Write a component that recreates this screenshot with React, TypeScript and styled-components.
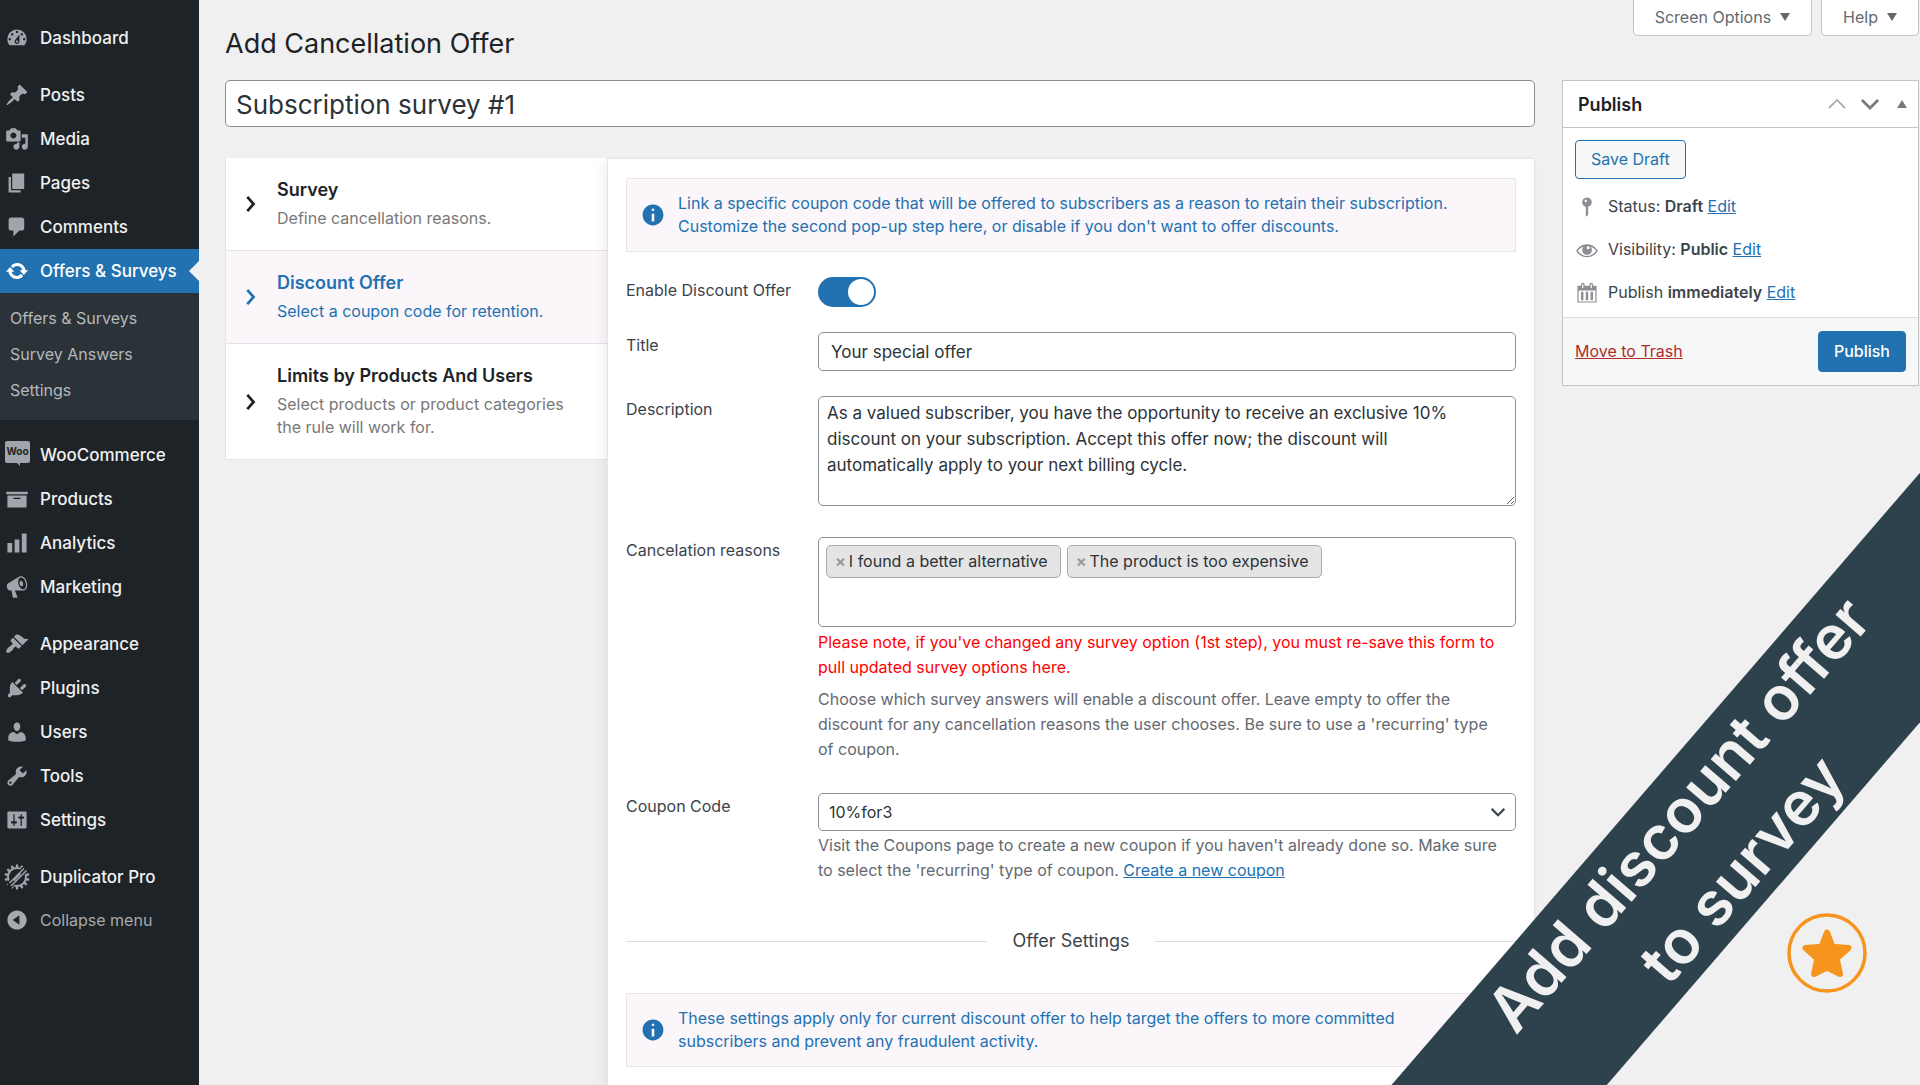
import React, { useState } from "react";
import styled, { createGlobalStyle, css } from "styled-components";

const color = {
  page: "#f0f0f1",
  ink: "#1d2327",
  body: "#3c434a",
  muted: "#646970",
  blue: "#2271b1",
  tint: "#faf6fa",
  line: "#c3c4c7",
  soft: "#e4e4e8",
  control: "#8c8f94",
  dark: "#1d2327",
  darker: "#2c3338",
  ribbon: "#2e424d",
  orange: "#f7941d",
};

const GlobalStyle = createGlobalStyle`
  *, *::before, *::after { box-sizing: border-box; }
  body {
    margin: 0;
    background: ${color.page};
    color: ${color.body};
    font-family: Inter, "Liberation Sans", sans-serif;
    font-size: 16px;
    line-height: 25px;
  }
  button, input, textarea, select { font: inherit; color: inherit; }
  h1, h2, p, ul { margin: 0; padding: 0; }
  ul { list-style: none; }
`;

const icons = {
  dashboard:
    "M3.76 16h12.48c1.1-1.37 1.76-3.11 1.76-5 0-4.42-3.58-8-8-8s-8 3.58-8 8c0 1.89.66 3.63 1.76 5zM10 4c.55 0 1 .45 1 1s-.45 1-1 1-1-.45-1-1 .45-1 1-1zM6 6c.55 0 1 .45 1 1s-.45 1-1 1-1-.45-1-1 .45-1 1-1zm8 0c.55 0 1 .45 1 1s-.45 1-1 1-1-.45-1-1 .45-1 1-1zm-5.37 5.55L12 7v6c0 1.1-.9 2-2 2s-2-.9-2-2c0-.57.24-1.08.63-1.45zM4 10c.55 0 1 .45 1 1s-.45 1-1 1-1-.45-1-1 .45-1 1-1zm12 0c.55 0 1 .45 1 1s-.45 1-1 1-1-.45-1-1 .45-1 1-1zm-5 3c0-.55-.45-1-1-1s-1 .45-1 1 .45 1 1 1 1-.45 1-1z",
  post: "M10.44 3.02l1.82-1.82 6.36 6.35-1.83 1.82c-1.05-.68-2.48-.57-3.41.36l-.75.75c-.92.93-1.04 2.35-.35 3.41l-1.83 1.82-2.41-2.41-2.8 2.79c-.42.42-3.38 2.71-3.8 2.29s1.86-3.39 2.28-3.81l2.79-2.79L4.1 9.36l1.83-1.82c1.05.69 2.48.57 3.4-.36l.75-.75c.93-.92 1.05-2.35.36-3.41z",
  media:
    "M13 11V4c0-.55-.45-1-1-1h-1.67L9 1H5L3.67 3H2c-.55 0-1 .45-1 1v7c0 .55.45 1 1 1h10c.55 0 1-.45 1-1zM7 4.5c1.38 0 2.5 1.12 2.5 2.5S8.38 9.5 7 9.5 4.5 8.38 4.5 7 5.62 4.5 7 4.5zM14 6h5v10.5c0 1.38-1.12 2.5-2.5 2.5S14 17.88 14 16.5s1.12-2.5 2.5-2.5c.17 0 .34.02.5.05V9h-3V6zm-4 8.05V13h2v3.5c0 1.38-1.12 2.5-2.5 2.5S7 17.88 7 16.5 8.12 14 9.5 14c.17 0 .34.02.5.05z",
  page: "M6 15V2h10v13H6zm-1 1h8v2H3V5h2v11z",
  comments:
    "M5 2h9c1.1 0 2 .9 2 2v7c0 1.1-.9 2-2 2h-2l-5 5v-5H5c-1.1 0-2-.9-2-2V4c0-1.1.9-2 2-2z",
  update:
    "M10.2 3.28c3.53 0 6.43 2.61 6.92 6h2.08l-3.5 4-3.5-4h2.32c-.45-1.97-2.21-3.45-4.32-3.45-1.45 0-2.73.71-3.54 1.78L4.95 5.66C6.23 4.2 8.11 3.28 10.2 3.28zm-.4 13.44c-3.52 0-6.43-2.61-6.92-6H.8l3.5-4c1.17 1.33 2.33 2.67 3.5 4H5.48c.45 1.97 2.21 3.45 4.32 3.45 1.45 0 2.73-.71 3.54-1.78l1.71 1.95c-1.28 1.46-3.15 2.38-5.25 2.38z",
  archive: "M19 4v2H1V4h18zM2 7h16v10H2V7zm11 3V9H7v1h6z",
  chart: "M18 18V2h-4v16h4zm-6 0V7H8v11h4zm-6 0v-8H2v8h4z",
  megaphone:
    "M18.15 5.94c.46 1.62.38 3.22-.02 4.48-.42 1.28-1.26 2.18-2.3 2.48-.16.06-.26.06-.4.06-.06.02-.12.02-.18.02-.06.02-.14.02-.22.02h-6.8l2.22 5.5c.02.14-.06.26-.14.34-.08.1-.24.16-.34.16H6.95c-.1 0-.26-.06-.34-.16-.08-.08-.16-.2-.14-.34l-1-5.5H4.25l-.02-.02c-.5.06-1.08-.18-1.54-.62s-.88-1.08-1.06-1.88c-.24-.8-.2-1.56-.02-2.2.18-.62.58-1.08 1.06-1.3l.02-.02 9-5.4c.1-.06.18-.1.24-.16.06-.04.14-.08.24-.12.16-.08.28-.12.5-.18 1.04-.3 2.24.1 3.22.98s1.84 2.24 2.26 3.86zm-2.58 5.98h-.02c.4-.1.74-.34 1.04-.7.58-.7.86-1.76.86-3.04 0-.64-.1-1.3-.28-1.98-.34-1.36-1.02-2.5-1.78-3.24s-1.68-1.1-2.46-.88c-.82.22-1.4.96-1.7 2-.32 1.04-.28 2.36.06 3.72.38 1.36 1 2.5 1.8 3.24.78.74 1.62 1.1 2.48.88zm-2.54-7.08c.22-.04.42-.02.62.04.38.16.76.48 1.02 1s.42 1.2.42 1.78c0 .3-.04.56-.12.8-.18.48-.44.84-.86.94-.34.1-.8-.06-1.14-.4s-.64-.86-.78-1.5c-.18-.62-.12-1.24.02-1.72s.48-.84.82-.94z",
  appearance:
    "M14.48 11.06L7.41 3.99l1.5-1.5c.5-.56 2.3-.47 3.51.32 1.21.8 1.43 1.28 2.91 2.1 1.18.64 2.45 1.26 4.45.85zm-.71.71L6.7 4.7 4.93 6.47c-.39.39-.39 1.02 0 1.41l1.06 1.06c.39.39.39 1.03 0 1.42-.6.6-1.43 1.11-2.21 1.69-.35.26-.7.53-1.01.84C1.43 14.23.4 16.08 1.4 17.07c.99 1 2.84-.03 4.18-1.36.31-.31.58-.66.85-1.02.57-.78 1.08-1.61 1.69-2.21.39-.39 1.02-.39 1.41 0l1.06 1.06c.39.39 1.02.39 1.41 0z",
  plugins:
    "M13.11 4.36L9.87 7.6 8 5.73l3.24-3.24c.35-.34 1.05-.2 1.56.32.52.51.66 1.21.31 1.55zm-8 1.77l.91-1.12 9.01 9.01-1.19.84c-.71.71-2.63 1.16-3.82 1.16H6.14L4.9 17.26c-.59.59-1.54.59-2.12 0-.59-.58-.59-1.53 0-2.12l1.24-1.24v-3.88c0-1.13.4-3.19 1.09-3.89zm7.26 3.97l3.24-3.24c.34-.35 1.04-.21 1.55.31.52.51.66 1.21.31 1.55l-3.24 3.25z",
  users:
    "M10 9.25c-2.27 0-2.73-3.44-2.73-3.44C7 4.02 7.82 2 9.97 2c2.16 0 2.98 2.02 2.71 3.81 0 0-.41 3.44-2.68 3.44zm0 2.57L12.72 10c2.39 0 4.52 2.33 4.52 4.53v2.49s-3.65 1.13-7.24 1.13c-3.65 0-7.24-1.13-7.24-1.13v-2.49c0-2.25 1.94-4.48 4.47-4.48z",
  tools:
    "M16.68 9.77c-1.34 1.34-3.3 1.67-4.95.99l-5.41 6.52c-.99.99-2.59.99-3.58 0s-.99-2.59 0-3.57l6.52-5.42c-.68-1.65-.35-3.61.99-4.95 1.28-1.28 3.12-1.62 4.72-1.06l-2.89 2.89 2.82 2.82 2.86-2.87c.53 1.58.18 3.39-1.08 4.65zM3.81 16.21c.4.39 1.04.39 1.43 0 .4-.4.4-1.04 0-1.43-.39-.4-1.03-.4-1.43 0-.39.39-.39 1.03 0 1.43z",
  settings:
    "M18 16V4c0-.55-.45-1-1-1H3c-.55 0-1 .45-1 1v12c0 .55.45 1 1 1h14c.55 0 1-.45 1-1zM8 11h1c.55 0 1 .45 1 1s-.45 1-1 1H8v1.5c0 .28-.22.5-.5.5s-.5-.22-.5-.5V13H6c-.55 0-1-.45-1-1s.45-1 1-1h1V5.5c0-.28.22-.5.5-.5s.5.22.5.5V11zm5-2h-1c-.55 0-1-.45-1-1s.45-1 1-1h1V5.5c0-.28.22-.5.5-.5s.5.22.5.5V7h1c.55 0 1 .45 1 1s-.45 1-1 1h-1v5.5c0 .28-.22.5-.5.5s-.5-.22-.5-.5V9z",
  collapse:
    "M10 2c4.42 0 8 3.58 8 8s-3.58 8-8 8-8-3.58-8-8 3.58-8 8-8zm2 12V6l-5.6 4z",
  info: "M10 2c4.42 0 8 3.58 8 8s-3.58 8-8 8-8-3.58-8-8 3.58-8 8-8zm1 4c0-.55-.45-1-1-1s-1 .45-1 1 .45 1 1 1 1-.45 1-1zm0 9V9H9v6h2z",
  eye: "M18.3 9.5C15 4.9 8.5 3.8 3.9 7.2c-1.2.9-2.2 2.1-3 3.4.2.4.5.8.8 1.2 3.3 4.6 9.6 5.6 14.2 2.4.9-.7 1.7-1.4 2.4-2.4.3-.4.5-.8.8-1.2-.3-.4-.5-.8-.8-1.1zm-8.2-2.3c.5-.5 1.3-.5 1.8 0s.5 1.3 0 1.8-1.3.5-1.8 0-.5-1.3 0-1.8zm-.1 7.7c-3.1 0-6-1.6-7.7-4.2C3.5 9 5.1 7.8 7 7.2c-.7.8-1 1.7-1 2.7 0 2.2 1.7 4.1 4 4.1 2.2 0 4.1-1.7 4.1-4v-.1c0-1-.4-2-1.1-2.7 1.9.6 3.5 1.8 4.7 3.5-1.7 2.6-4.6 4.2-7.7 4.2z",
  calendar:
    "M15 4h3v14H2V4h3V3c0-.83.67-1.5 1.5-1.5S8 2.17 8 3v1h4V3c0-.83.67-1.5 1.5-1.5S15 2.17 15 3v1zM6 3v2.5c0 .28.22.5.5.5s.5-.22.5-.5V3c0-.28-.22-.5-.5-.5S6 2.72 6 3zm7 0v2.5c0 .28.22.5.5.5s.5-.22.5-.5V3c0-.28-.22-.5-.5-.5s-.5.22-.5.5zm4 14V8H3v9h14zM7 16V9H5v7h2zm4 0V9H9v7h2zm4 0V9h-2v7h2z",
  status:
    "M14 6c0 1.86-1.28 3.41-3 3.86V16c0 1-2 2-2 2V9.86c-1.72-.45-3-2-3-3.86 0-2.21 1.79-4 4-4s4 1.79 4 4zM8 5c0 .55.45 1 1 1s1-.45 1-1-.45-1-1-1-1 .45-1 1z",
};

type IconName = keyof typeof icons | "woo" | "gear";

const Svg = styled.svg<{ $size: number }>`
  display: block;
  flex: none;
  width: ${(p) => p.$size}px;
  height: ${(p) => p.$size}px;
  fill: currentColor;
`;

function Icon({ name, size = 24 }: { name: IconName; size?: number }) {
  if (name === "woo") {
    return (
      <Svg $size={size} viewBox="0 0 24 24" aria-hidden="true" overflow="visible">
        <path d="M2-2h21q2 0 2 2v18q0 2-2 2h-8v3l-3-3H2q-2 0-2-2V0q0-2 2-2z" />
        <text x="12.5" y="12" textAnchor="middle" fontSize="10" fontWeight="700" fill={color.dark}>
          Woo
        </text>
      </Svg>
    );
  }
  if (name === "gear") {
    const teeth = Array.from({ length: 14 }, (_, i) => i * (360 / 14));
    return (
      <Svg $size={size} viewBox="0 0 24 24" aria-hidden="true" overflow="visible">
        {teeth.map((a) => (
          <path key={a} d="M10.6 2.5l.4-3h2l.4 3z" transform={`rotate(${a} 12 12)`} />
        ))}
        <circle cx="12" cy="12" r="9" fill="none" stroke="currentColor" strokeWidth="2" />
        <path d="M3 19.5L19.5 3M4.5 22L22 4.5" stroke={color.dark} strokeWidth="4.5" />
        <path d="M4.5 18L19 3.5M6 21L21.5 5.5M8.5 15.8l7-7" stroke="currentColor" strokeWidth="1.5" />
      </Svg>
    );
  }
  return (
    <Svg $size={size} viewBox="0 0 20 20" aria-hidden="true">
      <path fillRule="evenodd" d={icons[name]} />
    </Svg>
  );
}

function Chevron({ dir, size = 18, weight = 3 }: { dir: "right" | "up" | "down"; size?: number; weight?: number }) {
  const d = { right: "M7 2l7 8-7 8", up: "M1 14.5l9-9 9 9", down: "M1 5.5l9 9 9-9" }[dir];
  return (
    <Svg $size={size} viewBox="0 0 20 20" aria-hidden="true">
      <path d={d} fill="none" stroke="currentColor" strokeWidth={weight} />
    </Svg>
  );
}

/* ---------- shell ---------- */

const Shell = styled.div`
  position: relative;
  display: grid;
  grid-template-columns: 199px minmax(0, 1fr);
  min-height: 100vh;
  overflow: hidden;
`;

const Sidebar = styled.nav`
  display: flex;
  flex-direction: column;
  gap: 13px;
  padding-top: 16px;
  background: ${color.dark};
`;

const MenuLink = styled.a<{ $active?: boolean }>`
  position: relative;
  display: flex;
  align-items: center;
  gap: 11px;
  height: 44px;
  padding-left: 5px;
  color: ${(p) => (p.$active ? "#fff" : "#f0f0f1")};
  font-size: 17px;
  font-weight: 500;
  text-decoration: none;
  white-space: nowrap;

  svg { color: ${(p) => (p.$active ? "#fff" : "#a0a5ab")}; }

  ${(p) =>
    p.$active &&
    css`
      background: ${color.blue};
      &::after {
        content: "";
        position: absolute;
        right: 0;
        border: 10px solid transparent;
        border-left-width: 0;
        border-right-color: ${color.page};
      }
    `}
`;

const SubMenu = styled.ul`
  padding: 7px 0 12px;
  background: ${color.darker};
`;

const SubLink = styled.a`
  display: block;
  padding-left: 10px;
  color: #b4b8bc;
  line-height: 36px;
  text-decoration: none;
`;

const Collapse = styled.button`
  display: flex;
  align-items: center;
  gap: 11px;
  width: 100%;
  height: 42px;
  padding: 0 0 0 5px;
  border: 0;
  background: none;
  color: #a7aaad;
`;

const menuGroups: { icon: IconName; label: string }[][] = [
  [{ icon: "dashboard", label: "Dashboard" }],
  [
    { icon: "post", label: "Posts" },
    { icon: "media", label: "Media" },
    { icon: "page", label: "Pages" },
    { icon: "comments", label: "Comments" },
    { icon: "update", label: "Offers & Surveys" },
  ],
  [
    { icon: "woo", label: "WooCommerce" },
    { icon: "archive", label: "Products" },
    { icon: "chart", label: "Analytics" },
    { icon: "megaphone", label: "Marketing" },
  ],
  [
    { icon: "appearance", label: "Appearance" },
    { icon: "plugins", label: "Plugins" },
    { icon: "users", label: "Users" },
    { icon: "tools", label: "Tools" },
    { icon: "settings", label: "Settings" },
  ],
  [{ icon: "gear", label: "Duplicator Pro" }],
];

const subMenu = ["Offers & Surveys", "Survey Answers", "Settings"];

function AdminMenu() {
  return (
    <Sidebar aria-label="Main menu">
      {menuGroups.map((group, i) => (
        <ul key={i}>
          {group.map(({ icon, label }) => {
            const active = icon === "update";
            return (
              <li key={label}>
                <MenuLink href="#" $active={active}>
                  <Icon name={icon} />
                  {label}
                </MenuLink>
                {active && (
                  <SubMenu>
                    {subMenu.map((s) => (
                      <li key={s}>
                        <SubLink href="#">{s}</SubLink>
                      </li>
                    ))}
                  </SubMenu>
                )}
              </li>
            );
          })}
          {i === menuGroups.length - 1 && (
            <li>
              <Collapse type="button">
                <Icon name="collapse" />
                Collapse menu
              </Collapse>
            </li>
          )}
        </ul>
      ))}
    </Sidebar>
  );
}

/* ---------- page ---------- */

const Page = styled.main`
  display: flex;
  flex-direction: column;
  padding: 0 1px 0 26px;
`;

const PageHeader = styled.header`
  display: flex;
  justify-content: space-between;
  height: 80px;
`;

const PageTitle = styled.h1`
  padding-top: 26px;
  color: ${color.ink};
  font-size: 27px;
  font-weight: 400;
  line-height: 36px;
`;

const ScreenTabs = styled.div`
  display: flex;
  align-items: flex-start;
  gap: 9px;
`;

const ScreenTab = styled.button`
  display: flex;
  align-items: center;
  gap: 9px;
  height: 36px;
  padding: 0 21px 1px;
  border: 1px solid ${color.line};
  border-top: 0;
  border-radius: 0 0 5px 5px;
  background: #fff;
  color: ${color.muted};
`;

const Triangle = styled.span<{ $up?: boolean }>`
  border: 5px solid transparent;
  ${(p) =>
    p.$up
      ? "border-top-width: 0; border-bottom: 8px solid #787c82;"
      : "border-bottom-width: 0; border-top: 8px solid #646970;"}
`;

const Columns = styled.div`
  display: grid;
  flex: 1;
  grid-template-columns: minmax(0, 1fr) 357px;
  gap: 27px;
`;

const MainColumn = styled.div`
  display: flex;
  flex-direction: column;
  gap: 31px;
`;

const fieldBox = css`
  display: block;
  width: 100%;
  border: 1px solid ${color.control};
  border-radius: 5px;
  background: #fff;
  color: ${color.darker};
`;

const SurveyTitle = styled.input`
  ${fieldBox}
  height: 47px;
  padding: 2px 10px 0;
  font-size: 26px;
`;

const Editor = styled.div`
  display: grid;
  flex: 1;
  grid-template-columns: 382px minmax(0, 1fr);
`;

const StepList = styled.div`
  align-self: start;
  border-left: 1px solid ${color.soft};
`;

const Step = styled.button<{ $active: boolean }>`
  display: grid;
  grid-template-columns: 18px minmax(0, 1fr);
  align-items: center;
  gap: 18px;
  width: 100%;
  padding: 20px 24px 20px 15px;
  border: 0;
  border-bottom: 1px solid ${color.soft};
  background: ${(p) => (p.$active ? color.tint : "#fff")};
  color: ${(p) => (p.$active ? color.blue : color.ink)};
  line-height: 23px;
  text-align: left;
`;

const StepText = styled.span`
  display: grid;
  gap: 6px;
`;

const StepName = styled.strong`
  font-size: 18px;
  font-weight: 600;
`;

const StepHint = styled.span<{ $active: boolean }>`
  color: ${(p) => (p.$active ? color.blue : "#787878")};
`;

const Panel = styled.form`
  position: relative;
  display: flex;
  flex-direction: column;
  gap: 25px;
  padding: 19px 18px 18px;
  border: 1px solid ${color.soft};
  border-bottom: 0;
  background: #fff;
  box-shadow: -4px 4px 10px rgba(0, 0, 0, 0.06);
`;

const Notice = styled.div`
  display: flex;
  align-items: center;
  gap: 12px;
  min-height: 74px;
  padding: 0 13px;
  border: 1px solid #e8e6ea;
  background: ${color.tint};
  color: ${color.blue};
  line-height: 23px;
`;

const NoticeText = styled.p`
  max-width: 800px;
`;

const Row = styled.div<{ $tall?: boolean }>`
  display: grid;
  grid-template-columns: 192px minmax(0, 1fr);
  align-items: start;
  padding-bottom: ${(p) => (p.$tall ? 6 : 0)}px;
`;

const Label = styled.label`
  line-height: 26px;
`;

const Switch = styled.input`
  display: flex;
  align-items: center;
  width: 58px;
  height: 30px;
  margin: 0;
  padding: 0 2px;
  border-radius: 15px;
  background: ${color.control};
  appearance: none;

  &::before {
    content: "";
    width: 26px;
    height: 26px;
    border-radius: 50%;
    background: #fff;
  }
  &:checked {
    justify-content: flex-end;
    background: ${color.blue};
  }
`;

const TextInput = styled.input`
  ${fieldBox}
  height: 39px;
  padding: 0 12px;
  font-size: 17px;
`;

const TextArea = styled.textarea`
  ${fieldBox}
  height: 110px;
  padding: 3px 24px 4px 8px;
  font-size: 17px;
  line-height: 26px;
  resize: vertical;
`;

const TagBox = styled.div`
  ${fieldBox}
  display: flex;
  flex-wrap: wrap;
  align-content: flex-start;
  gap: 6px;
  min-height: 90px;
  padding: 7px;
`;

const Tag = styled.span`
  display: flex;
  align-items: center;
  gap: 3px;
  height: 33px;
  padding: 0 12px 0 8px;
  border: 1px solid #aaa;
  border-radius: 5px;
  background: #e4e4e4;
`;

const TagRemove = styled.button`
  padding: 0;
  border: 0;
  background: none;
  color: #999;
  font-weight: 700;
`;

const TagInput = styled.input`
  flex: 1;
  min-width: 20px;
  height: 33px;
  padding: 0;
  border: 0;
  outline: 0;
  background: none;
`;

const Warning = styled.p`
  margin: 3px 0 7px;
  color: #f00;
`;

const Help = styled.p`
  padding-right: 14px;
  color: ${color.muted};
`;

const Link = styled.a<{ $danger?: boolean }>`
  color: ${(p) => (p.$danger ? "#b32d2e" : color.blue)};
`;

const SelectWrap = styled.div`
  display: grid;
  align-items: center;
  margin-bottom: 2px;

  > * { grid-area: 1 / 1; }
  > svg {
    justify-self: end;
    margin-right: 11px;
    pointer-events: none;
  }
`;

const Select = styled.select`
  ${fieldBox}
  height: 38px;
  padding: 0 30px 0 10px;
  appearance: none;
`;

const Divider = styled.h2`
  display: flex;
  align-items: center;
  gap: 25px;
  margin: 20px 0 14px;
  font-size: 18px;
  font-weight: 400;
  line-height: 26px;

  &::before, &::after {
    content: "";
    flex: 1;
    height: 1px;
    background: #dcdcde;
  }
`;

/* ---------- publish box ---------- */

const PublishBox = styled.aside`
  align-self: start;
  border: 1px solid ${color.line};
  background: #fff;
`;

const BoxHeader = styled.header`
  display: flex;
  align-items: center;
  height: 47px;
  padding: 0 11px 0 15px;
  border-bottom: 1px solid ${color.line};
`;

const BoxTitle = styled.h2`
  flex: 1;
  color: ${color.ink};
  font-size: 18px;
  font-weight: 600;
`;

const OrderButtons = styled.div`
  display: grid;
  grid-template-columns: 33px 36px auto;
  align-items: center;
`;

const OrderButton = styled.button<{ $off?: boolean }>`
  display: flex;
  padding: 0;
  border: 0;
  background: none;
  color: ${(p) => (p.$off ? "#a7aaad" : "#787c82")};
`;

const BoxBody = styled.div`
  padding: 12px 12px 3px;
`;

const Button = styled.button<{ $primary?: boolean }>`
  height: ${(p) => (p.$primary ? 41 : 39)}px;
  padding: 0 15px;
  border: 1px solid ${color.blue};
  border-radius: 4px;
  background: ${(p) => (p.$primary ? color.blue : "#f6f7f7")};
  color: ${(p) => (p.$primary ? "#fff" : color.blue)};
  font-weight: ${(p) => (p.$primary ? 500 : 400)};
`;

const MetaList = styled.ul`
  padding-top: 6px;
`;

const Meta = styled.li`
  display: flex;
  align-items: center;
  gap: 9px;
  height: 43px;

  svg { color: #8c8f94; }
  strong { font-weight: 600; }
`;

const BoxFooter = styled.footer`
  display: flex;
  align-items: center;
  justify-content: space-between;
  height: 68px;
  padding: 0 12px;
  border-top: 1px solid #dcdcde;
  background: #f6f7f7;
`;

/* ---------- promo overlay ---------- */

const Ribbon = styled.div`
  position: absolute;
  right: -335px;
  bottom: 157px;
  display: flex;
  flex-direction: column;
  justify-content: center;
  width: 1100px;
  height: 163px;
  padding-left: 14px;
  background: ${color.ribbon};
  color: #f0f0f1;
  font-size: 61px;
  font-weight: 600;
  line-height: 84px;
  text-align: center;
  transform: rotate(-49.2deg);
  pointer-events: none;
`;

const StarBadge = styled.svg`
  position: absolute;
  right: 53px;
  bottom: 92px;
  width: 80px;
  height: 80px;
`;

const steps = [
  { name: "Survey", hint: "Define cancellation reasons." },
  { name: "Discount Offer", hint: "Select a coupon code for retention." },
  { name: "Limits by Products And Users", hint: "Select products or product categories the rule will work for." },
];

const metas: { icon: IconName; label: string; value: string }[] = [
  { icon: "status", label: "Status:", value: "Draft" },
  { icon: "eye", label: "Visibility:", value: "Public" },
  { icon: "calendar", label: "Publish", value: "immediately" },
];

export default function App() {
  const [step, setStep] = useState(1);
  const [tags, setTags] = useState(["I found a better alternative", "The product is too expensive"]);

  return (
    <>
      <GlobalStyle />
      <Shell>
        <AdminMenu />
        <Page>
          <PageHeader>
            <PageTitle>Add Cancellation Offer</PageTitle>
            <ScreenTabs>
              <ScreenTab type="button">
                Screen Options <Triangle />
              </ScreenTab>
              <ScreenTab type="button">
                Help <Triangle />
              </ScreenTab>
            </ScreenTabs>
          </PageHeader>
          <Columns>
            <MainColumn>
              <SurveyTitle aria-label="Survey title" defaultValue="Subscription survey #1" />
              <Editor>
                <StepList>
                  {steps.map((s, i) => (
                    <Step key={s.name} type="button" $active={i === step} onClick={() => setStep(i)}>
                      <Chevron dir="right" />
                      <StepText>
                        <StepName>{s.name}</StepName>
                        <StepHint $active={i === step}>{s.hint}</StepHint>
                      </StepText>
                    </Step>
                  ))}
                </StepList>
                <Panel onSubmit={(e) => e.preventDefault()}>
                  <Notice>
                    <Icon name="info" size={26} />
                    <NoticeText>
                      Link a specific coupon code that will be offered to subscribers as a reason to retain their
                      subscription. Customize the second pop-up step here, or disable if you don't want to offer
                      discounts.
                    </NoticeText>
                  </Notice>
                  <Row>
                    <Label htmlFor="enable">Enable Discount Offer</Label>
                    <Switch id="enable" type="checkbox" defaultChecked />
                  </Row>
                  <Row>
                    <Label htmlFor="title">Title</Label>
                    <TextInput id="title" defaultValue="Your special offer" />
                  </Row>
                  <Row $tall>
                    <Label htmlFor="description">Description</Label>
                    <TextArea
                      id="description"
                      defaultValue="As a valued subscriber, you have the opportunity to receive an exclusive 10% discount on your subscription. Accept this offer now; the discount will automatically apply to your next billing cycle."
                    />
                  </Row>
                  <Row $tall>
                    <Label htmlFor="reasons">Cancelation reasons</Label>
                    <div>
                      <TagBox>
                        {tags.map((t) => (
                          <Tag key={t}>
                            <TagRemove
                              type="button"
                              aria-label={`Remove ${t}`}
                              onClick={() => setTags(tags.filter((x) => x !== t))}
                            >
                              ×
                            </TagRemove>
                            {t}
                          </Tag>
                        ))}
                        <TagInput id="reasons" />
                      </TagBox>
                      <Warning>
                        Please note, if you've changed any survey option (1st step), you must re-save this form to pull
                        updated survey options here.
                      </Warning>
                      <Help>
                        Choose which survey answers will enable a discount offer. Leave empty to offer the discount for
                        any cancellation reasons the user chooses. Be sure to use a 'recurring' type of coupon.
                      </Help>
                    </div>
                  </Row>
                  <Row>
                    <Label htmlFor="coupon">Coupon Code</Label>
                    <div>
                      <SelectWrap>
                        <Select id="coupon" defaultValue="10%for3">
                          <option>10%for3</option>
                        </Select>
                        <Chevron dir="down" size={14} />
                      </SelectWrap>
                      <Help>
                        Visit the Coupons page to create a new coupon if you haven't already done so. Make sure to
                        select the 'recurring' type of coupon. <Link href="#">Create a new coupon</Link>
                      </Help>
                    </div>
                  </Row>
                  <Divider>Offer Settings</Divider>
                  <Notice>
                    <Icon name="info" size={26} />
                    <NoticeText>
                      These settings apply only for current discount offer to help target the offers to more committed
                      subscribers and prevent any fraudulent activity.
                    </NoticeText>
                  </Notice>
                </Panel>
              </Editor>
            </MainColumn>
            <PublishBox>
              <BoxHeader>
                <BoxTitle>Publish</BoxTitle>
                <OrderButtons>
                  <OrderButton type="button" aria-label="Move up" $off>
                    <Chevron dir="up" weight={2} />
                  </OrderButton>
                  <OrderButton type="button" aria-label="Move down">
                    <Chevron dir="down" />
                  </OrderButton>
                  <OrderButton type="button" aria-label="Toggle panel">
                    <Triangle $up />
                  </OrderButton>
                </OrderButtons>
              </BoxHeader>
              <BoxBody>
                <Button type="button">Save Draft</Button>
                <MetaList>
                  {metas.map((m) => (
                    <Meta key={m.icon}>
                      <Icon name={m.icon} />
                      <span>
                        {m.label} <strong>{m.value}</strong> <Link href="#">Edit</Link>
                      </span>
                    </Meta>
                  ))}
                </MetaList>
              </BoxBody>
              <BoxFooter>
                <Link href="#" $danger>
                  Move to Trash
                </Link>
                <Button type="button" $primary>
                  Publish
                </Button>
              </BoxFooter>
            </PublishBox>
          </Columns>
        </Page>
        <Ribbon>
          <span>Add discount offer</span>
          <span>to survey</span>
        </Ribbon>
        <StarBadge viewBox="0 0 80 80" role="img" aria-label="Star">
          <circle cx="40" cy="40" r="38" fill="none" stroke={color.orange} strokeWidth="3.5" />
          <path
            d="M40 19.500l5.500 14.200 16 1.300-11.800 10.500 3.300 15.500L40 54.500 27 61l3.300-15.500L18.500 35l16-1.300z"
            fill={color.orange}
            stroke={color.orange}
            strokeWidth="6"
            strokeLinejoin="round"
          />
        </StarBadge>
      </Shell>
    </>
  );
}
